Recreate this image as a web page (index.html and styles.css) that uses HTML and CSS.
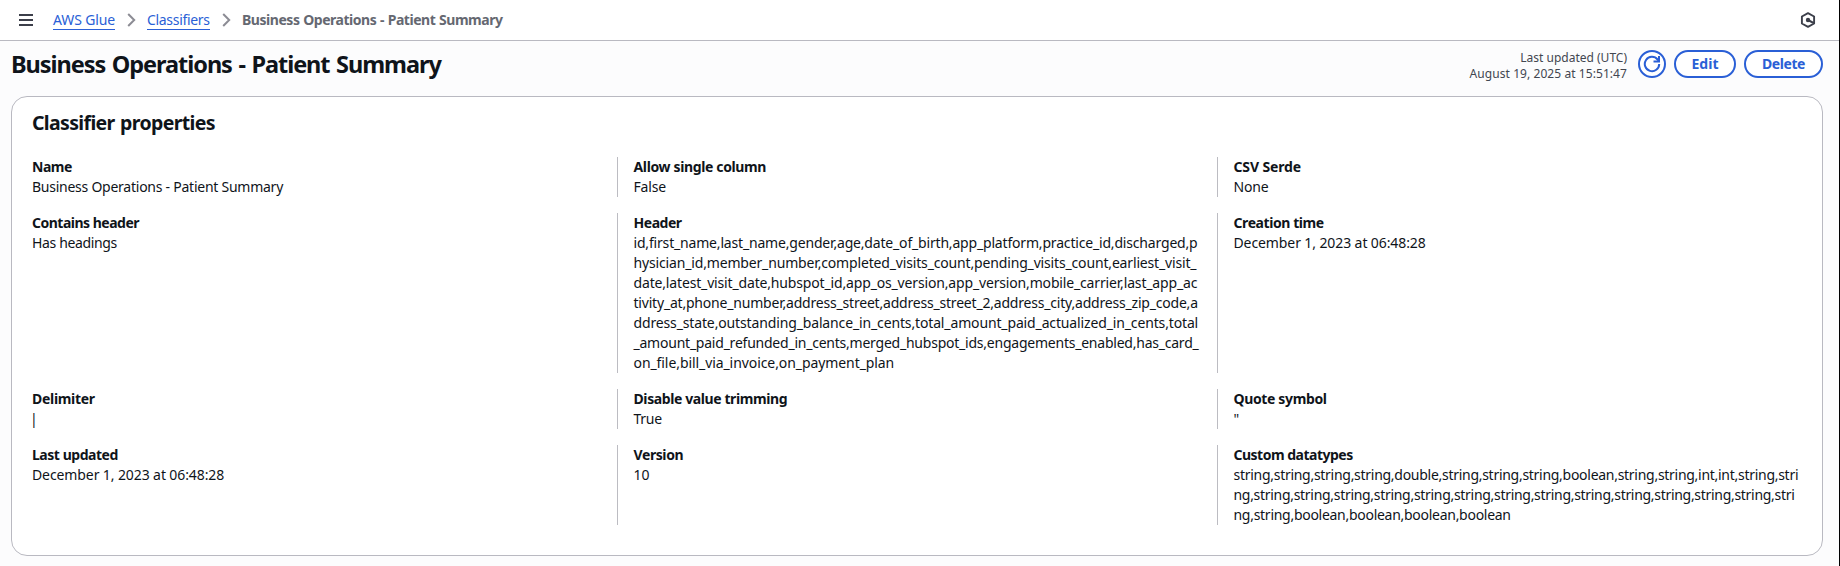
FILE: index.html
```html
<!DOCTYPE html>
<html lang="en">
<head>
<meta charset="utf-8">
<title>AWS Glue - Classifier</title>
<link rel="stylesheet" href="styles.css">
</head>
<body>
<main class="page">
<nav class="topbar">
  <svg class="menu" width="14" height="12" viewBox="0 0 14 12"><path d="M0 1h14M0 6h14M0 11h14" fill="none" stroke="#3c3f4a" stroke-width="2"/></svg>
  <a class="crumb crumb-glue">AWS Glue</a>
  <svg class="chevron" width="9" height="14" viewBox="0 0 9 14"><path d="M1.200 1l6 6-6 6" fill="none" stroke="#8c8c94" stroke-width="2"/></svg>
  <a class="crumb crumb-classifiers">Classifiers</a>
  <svg class="chevron" width="9" height="14" viewBox="0 0 9 14"><path d="M1.200 1l6 6-6 6" fill="none" stroke="#8c8c94" stroke-width="2"/></svg>
  <span class="current">Business Operations - Patient Summary</span>
  <svg class="hex" width="16" height="16" viewBox="0 0 16 16"><path d="M8 1.200l6.100 3.300v7L8 14.800l-6.100-3.300v-7z" fill="none" stroke="#3c3f4a" stroke-width="1.900" stroke-linejoin="round"/><circle cx="8" cy="8" r="2.200" fill="#3c3f4a"/><path d="M8 8l5.800 3.200" stroke="#3c3f4a" stroke-width="2"/></svg>
</nav>
<header class="head">
  <h1>Business Operations - Patient Summary</h1>
  <div class="updated"><div>Last updated (UTC)</div><div class="stamp">August 19, 2025 at 15:51:47</div></div>
  <button class="btn refresh" aria-label="Refresh"><svg width="18" height="18" viewBox="0 0 18 18"><path d="M16.200 9A7.200 7.200 0 1 1 14.600 4.500L16 6" fill="none" stroke="#2a5fd6" stroke-width="2"/><path d="M16 1v5.500h-5.500" fill="none" stroke="#2a5fd6" stroke-width="2"/></svg></button>
  <button class="btn edit">Edit</button>
  <button class="btn delete">Delete</button>
</header>
<section class="card">
  <h2>Classifier properties</h2>
  <div class="grid">
    <div class="cell first"><b class="s50">Name</b><p class="s25">Business Operations - Patient Summary</p></div>
    <div class="cell"><b class="s36">Allow single column</b><p class="s16">False</p></div>
    <div class="cell"><b class="s14">CSV Serde</b><p class="s14">None</p></div>

    <div class="cell first"><b class="s50">Contains header</b><p class="s36">Has headings</p></div>
    <div class="cell"><b class="s46">Header</b>
      <p class="s18">id,first_name,last_name,gender,age,date_of_birth,app_platform,practice_id,discharged,p</p>
      <p class="s16">hysician_id,member_number,completed_visits_count,pending_visits_count,earliest_visit_</p>
      <p class="s16">date,latest_visit_date,hubspot_id,app_os_version,app_version,mobile_carrier,last_app_ac</p>
      <p class="s20">tivity_at,phone_number,address_street,address_street_2,address_city,address_zip_code,a</p>
      <p class="s14">ddress_state,outstanding_balance_in_cents,total_amount_paid_actualized_in_cents,total</p>
      <p class="s23">_amount_paid_refunded_in_cents,merged_hubspot_ids,engagements_enabled,has_card_</p>
      <p class="s08">on_file,bill_via_invoice,on_payment_plan</p></div>
    <div class="cell"><b class="s42">Creation time</b><p class="s10">December 1, 2023 at 06:48:28</p></div>

    <div class="cell first"><b class="s30">Delimiter</b><p class="pipe">|</p></div>
    <div class="cell"><b class="s40">Disable value trimming</b><p class="s25">True</p></div>
    <div class="cell"><b class="s36">Quote symbol</b><p>"</p></div>

    <div class="cell first"><b class="s46">Last updated</b><p class="s10">December 1, 2023 at 06:48:28</p></div>
    <div class="cell"><b class="s40">Version</b><p>10</p></div>
    <div class="cell"><b class="s50">Custom datatypes</b>
      <p class="s28">string,string,string,string,double,string,string,string,boolean,string,string,int,int,string,stri</p>
      <p class="s30">ng,string,string,string,string,string,string,string,string,string,string,string,string,string,stri</p>
      <p class="s28">ng,string,boolean,boolean,boolean,boolean</p></div>
  </div>
</section>
</main>
</body>
</html>
```
FILE: styles.css
```css
* { box-sizing: border-box; }
body {
  margin: 0;
  background: #fcfcfd;
  font: 14px/20px "Noto Sans", sans-serif;
  color: #0f141a;
}
.page { height: 566px; border-right: 1px solid #000; }
svg { display: block; flex: none; }

/* breadcrumb bar */
.topbar {
  display: flex;
  align-items: center;
  height: 41px;
  padding: 0 23px 0 19px;
  background: #fff;
  border-bottom: 1px solid #b9b9c1;
}
.crumb { color: #2a5fd6; height: 20px; box-shadow: inset 0 -1px #2a5fd6; white-space: nowrap; }
.crumb-glue { width: 62px; margin-left: 20px; letter-spacing: -0.14px; }
.crumb-classifiers { width: 63px; letter-spacing: -0.32px; }
.chevron { margin: 0 11px 0 12px; }
.current { font-weight: 700; color: #656871; letter-spacing: -0.46px; word-spacing: 0.5px; white-space: nowrap; }
.hex { margin-left: auto; }

/* page heading */
.head { display: flex; align-items: center; height: 46px; margin-bottom: 9px; padding: 0 16px 0 11px; }
h1 {
  margin: 0 auto 0 0;
  font-size: 23.5px;
  line-height: 30px;
  letter-spacing: -1.05px;
  word-spacing: 1.5px;
  white-space: nowrap;
}
.updated { padding-top: 4px; font-size: 12px; line-height: 16px; text-align: right; color: #424650; }
.stamp { letter-spacing: 0.07px; }
.btn {
  display: flex;
  align-items: center;
  justify-content: center;
  height: 28px;
  margin: 0 0 0 8px;
  padding: 0;
  border: 2px solid #2a5fd6;
  border-radius: 14px;
  background: #fff;
  color: #2a5fd6;
  font: 700 14px/20px "Noto Sans", sans-serif;
}
.refresh { width: 28px; margin-left: 11px; }
.edit { width: 62px; }
.delete { width: 79px; letter-spacing: -0.4px; }

/* properties card */
.card {
  height: 460px;
  margin: 0 16px 0 11px;
  padding: 12px 20px;
  border: 1px solid #b9b9c1;
  border-radius: 16px;
  background: #fff;
}
h2 { margin: 0 0 20px; font-size: 19.5px; line-height: 28px; letter-spacing: -0.65px; word-spacing: 1px; }
.grid { display: grid; grid-template-columns: 585px 600px 585px; row-gap: 16px; }
.cell { padding-left: 15.5px; border-left: 1px solid #bcbcc2; white-space: nowrap; }
.first { padding-left: 0; border-left: 0; }
.cell p { margin: 0; }
.cell b { display: block; }
.pipe { text-indent: -2px; }

/* tracking steps, in hundredths of a pixel */
.s08 { letter-spacing: -0.08px; }
.s10 { letter-spacing: -0.1px; }
.s14 { letter-spacing: -0.14px; }
.s16 { letter-spacing: -0.16px; }
.s18 { letter-spacing: -0.18px; }
.s20 { letter-spacing: -0.2px; }
.s23 { letter-spacing: -0.23px; }
.s25 { letter-spacing: -0.25px; }
.s28 { letter-spacing: -0.28px; }
.s30 { letter-spacing: -0.3px; }
.s36 { letter-spacing: -0.36px; }
.s40 { letter-spacing: -0.4px; }
.s42 { letter-spacing: -0.42px; }
.s46 { letter-spacing: -0.46px; }
.s50 { letter-spacing: -0.5px; }
```
